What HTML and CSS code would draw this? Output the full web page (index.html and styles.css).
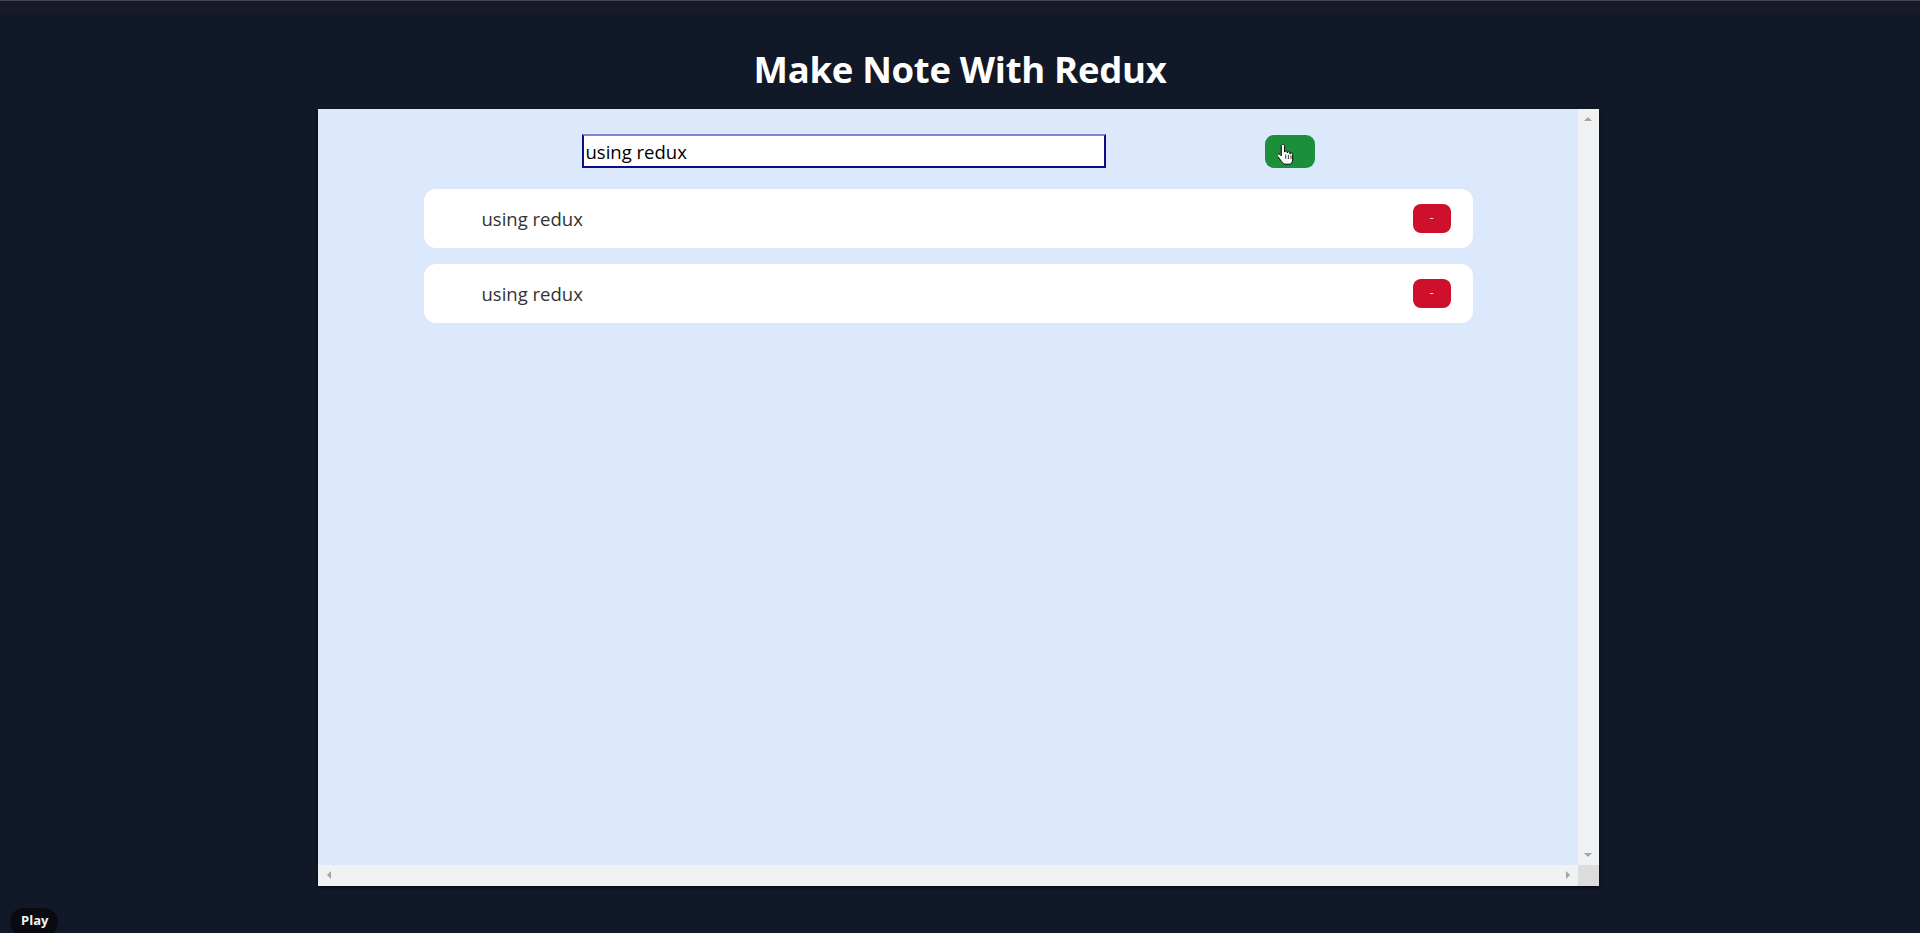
FILE: index.html
```html
<!DOCTYPE html>
<html lang="en">
<head>
<meta charset="utf-8">
<title>Make Note With Redux</title>
<link rel="stylesheet" href="styles.css">
</head>
<body>
<div class="page">
  <h1 class="title">Make Note With Redux</h1>
  <div class="frame">
    <div class="viewport">
      <div class="form-row">
        <input class="note-input" type="text" value="using redux">
        <button class="add-btn" type="button" aria-label="Add">
          <svg class="cursor" viewBox="0 0 18 26" width="16" height="23">
            <path d="M5.5 1.5c-1.1 0-1.8.8-1.8 1.8v11.2l-1.3-1.4c-.8-.8-2-.8-2.6 0-.6.7-.5 1.6.1 2.4l4.3 5.6c1 1.3 2.200 2.9 4.8 2.9h3.2c2.9 0 4.3-2.2 4.3-4.8v-6.3c0-1-.7-1.700-1.6-1.700-.8 0-1.4.6-1.4 1.4v-.9c0-1-.7-1.7-1.6-1.7-.8 0-1.5.6-1.5 1.4v-.8c0-1-.7-1.7-1.6-1.7-.8 0-1.4.6-1.4 1.4V3.3c0-1-.7-1.8-1.8-1.8z" fill="#fff" stroke="#000" stroke-width="1.1"/>
            <path d="M8.7 13v5M11.7 13.4v4.6M14.6 14v4" stroke="#000" stroke-width="0.9" fill="none"/>
          </svg>
        </button>
      </div>
      <ul class="notes">
        <li class="note">
          <span class="note-text">using redux</span>
          <button class="del-btn" type="button">-</button>
        </li>
        <li class="note">
          <span class="note-text">using redux</span>
          <button class="del-btn" type="button">-</button>
        </li>
      </ul>
    </div>
    <div class="vscroll">
      <span class="arrow up"></span>
      <span class="arrow down"></span>
    </div>
    <div class="hscroll">
      <span class="arrow left"></span>
      <span class="arrow right"></span>
    </div>
    <div class="corner"></div>
  </div>
</div>
<button class="play" type="button">Play</button>
</body>
</html>
```

FILE: styles.css
```css
* { box-sizing: border-box; }

html, body {
  margin: 0;
  padding: 0;
  height: 933px;
  overflow: hidden;
}

body {
  background: #111827;
  font-family: "Open Sans", "Noto Sans", "Liberation Sans", sans-serif;
  border-top: 1px solid #474750;
}

.page {
  display: flex;
  flex-direction: column;
  align-items: center;
  background: linear-gradient(#191a29 0, #191a29 12px, #111827 13px);
}

.title {
  margin: 0;
  padding-top: 43px;
  height: 108px;
  color: #fff;
  font-size: 36.5px;
  font-weight: 700;
  line-height: 50px;
  letter-spacing: -0.3px;
}

.frame {
  width: 1281px;
  height: 777px;
  margin-left: -3px;
  display: grid;
  grid-template-columns: 1fr 21px;
  grid-template-rows: 1fr 21px;
  box-shadow: 0 2px 3px rgba(0,0,0,0.6);
}

.viewport {
  background: #dce8fb;
  padding-top: 25px;
  display: flex;
  flex-direction: column;
  align-items: center;
}

.form-row {
  display: flex;
  align-items: center;
  gap: 159px;
}

.note-input {
  width: 524px;
  height: 34px;
  margin: 0;
  padding: 0 2px;
  border: 2px solid #0c0c8a;
  border-top-color: #8585cf;
  background: #fff;
  color: #000;
  font-family: inherit;
  font-size: 18.5px;
  outline: none;
}

.add-btn {
  position: relative;
  width: 50px;
  height: 33px;
  margin: 0;
  padding: 0;
  border: none;
  border-radius: 9px;
  background: #1c8f3b;
}

.cursor {
  position: absolute;
  left: 13px;
  top: 8px;
}

.notes {
  list-style: none;
  margin: 21px 0 0;
  padding: 0;
  width: 1049px;
  display: flex;
  flex-direction: column;
  gap: 16px;
}

.note {
  height: 59px;
  background: #fff;
  border-radius: 12px;
  display: flex;
  align-items: center;
  justify-content: space-between;
  padding: 0 22px 0 58px;
}

.note-text {
  color: #333;
  font-size: 18.5px;
  padding-bottom: 1px;
}

.del-btn {
  width: 38px;
  height: 29px;
  margin: 0;
  padding: 0 0 3px;
  border: none;
  border-radius: 8px;
  background: #cf102c;
  color: #ffd6dc;
  font-family: inherit;
  font-size: 13px;
  line-height: 1;
}

.vscroll, .hscroll {
  position: relative;
  background: #f0f1f3;
}

.corner {
  background: #dcdcdc;
}

.arrow {
  position: absolute;
  width: 0;
  height: 0;
  border: 4px solid transparent;
}

.arrow.up {
  left: 6px;
  top: 8px;
  border-bottom-color: #a3a3a3;
  border-top-width: 0;
}

.arrow.down {
  left: 6px;
  bottom: 8px;
  border-top-color: #a3a3a3;
  border-bottom-width: 0;
}

.arrow.left {
  left: 9px;
  top: 6px;
  border-right-color: #a3a3a3;
  border-left-width: 0;
}

.arrow.right {
  right: 8px;
  top: 6px;
  border-left-color: #a3a3a3;
  border-right-width: 0;
}

.play {
  position: absolute;
  left: 10px;
  top: 908px;
  height: 28px;
  padding: 0 10px 5px 11px;
  border: none;
  border-radius: 14px;
  background: #0a0b10;
  color: #f2f2f2;
  font-family: "Open Sans", "Noto Sans", sans-serif;
  font-size: 13px;
  font-weight: 700;
}
```
